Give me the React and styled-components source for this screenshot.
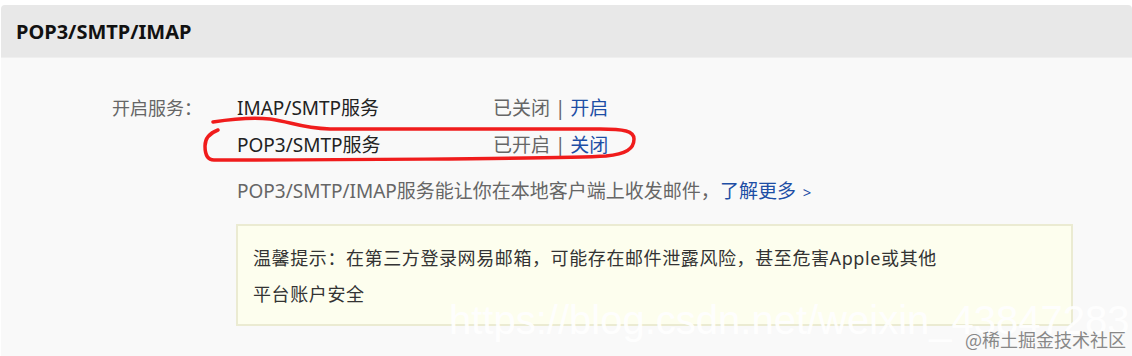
import React from "react";
import styled, { createGlobalStyle } from "styled-components";

const Global = createGlobalStyle`
  html, body { margin: 0; padding: 0; background: #ffffff; }
  body {
    font-family: "Noto Sans", "Noto Sans CJK SC", sans-serif;
    color: #222;
  }
`;

const Page = styled.div`
  position: relative;
  width: 1132px;
  height: 356px;
  overflow: hidden;
  padding: 5px 0 0 1px;
  box-sizing: border-box;
  display: flex;
  flex-direction: column;
`;

const Header = styled.div`
  height: 52px;
  flex: none;
  background: #e8e8e8;
  border-radius: 4px 4px 0 0;
  display: flex;
  align-items: center;
  padding-left: 15px;
  font-size: 20px;
  font-weight: 700;
  color: #111;
`;

const Body = styled.div`
  flex: 1;
  background: #f9f9f9;
  border-top: 1px solid #efefef;
  padding: 32px 0 0 111px;
  display: grid;
  grid-template-columns: 125px 1fr;
  align-content: start;
`;

const Label = styled.div`
  font-size: 18px;
  line-height: 37px;
  color: #666;
`;

const Content = styled.div`
  display: flex;
  flex-direction: column;
`;

const ServiceRow = styled.div`
  display: flex;
  font-size: 19px;
  line-height: 37px;
`;

const ServiceName = styled.span`
  width: 256px;
  color: #222;
`;

const Status = styled.span`
  color: #666;
`;

const Link = styled.a`
  color: #1d4ea5;
  text-decoration: none;
`;

const Arrow = styled.span`
  font-size: 15px;
  margin-left: 2px;
`;

const Desc = styled.div`
  margin-top: 9px;
  font-size: 19px;
  line-height: 37px;
  color: #666;
`;

const Tip = styled.div`
  margin-top: 13px;
  margin-left: -1px;
  width: 833px;
  height: 98px;
  box-sizing: content-box;
  border: 2px solid #ebebd2;
  background: #fdfeee;
`;

const TipText = styled.div`
  padding: 14px 0 0 15px;
  font-size: 18px;
  line-height: 36px;
  color: #333;
  letter-spacing: 0.6px;
`;

const Overlay = styled.svg`
  position: absolute;
  left: 0;
  top: 0;
  pointer-events: none;
`;

const Watermark = styled.div`
  position: absolute;
  left: 449px;
  top: 296px;
  font-family: "Liberation Sans", Arial, sans-serif;
  font-size: 40px;
  line-height: 48px;
  color: rgba(255, 255, 255, 0.92);
  white-space: nowrap;
  pointer-events: none;
`;

const Credit = styled.div`
  position: absolute;
  right: 6px;
  top: 327px;
  font-family: "Noto Sans CJK SC", sans-serif;
  font-size: 18px;
  line-height: 24px;
  color: #888;
  white-space: nowrap;
  text-shadow: 0 0 1px #fff;
`;

export default function App() {
  return (
    <>
      <Global />
      <Page>
        <Header>POP3/SMTP/IMAP</Header>
        <Body>
          <Label>开启服务：</Label>
          <Content>
            <ServiceRow>
              <ServiceName>IMAP/SMTP服务</ServiceName>
              <Status>
                已关闭 | <Link>开启</Link>
              </Status>
            </ServiceRow>
            <ServiceRow>
              <ServiceName>POP3/SMTP服务</ServiceName>
              <Status>
                已开启 | <Link>关闭</Link>
              </Status>
            </ServiceRow>
            <Desc>
              POP3/SMTP/IMAP服务能让你在本地客户端上收发邮件，
              <Link>
                了解更多 <Arrow>&gt;</Arrow>
              </Link>
            </Desc>
            <Tip>
              <TipText>
                温馨提示：在第三方登录网易邮箱，可能存在邮件泄露风险，甚至危害Apple或其他
                <br />
                平台账户安全
              </TipText>
            </Tip>
          </Content>
        </Body>
        <Overlay width="1132" height="356" viewBox="0 0 1132 356">
          <path
            d="M213 122 C 232 119, 252 117, 270 119 C 292 122, 300 128, 330 129 L 600 129 C 624 129, 634 131, 634 139 C 634 149, 626 154, 606 156 C 560 159, 300 160, 214 160 C 207 160, 205 154, 205 146 C 205 138, 210 133, 218 130"
            fill="none"
            stroke="#f01c1c"
            strokeWidth="3.5"
            strokeLinecap="round"
            strokeLinejoin="round"
          />
        </Overlay>
        <Watermark>https://blog.csdn.net/weixin_43847283</Watermark>
        <Credit>@稀土掘金技术社区</Credit>
      </Page>
    </>
  );
}
